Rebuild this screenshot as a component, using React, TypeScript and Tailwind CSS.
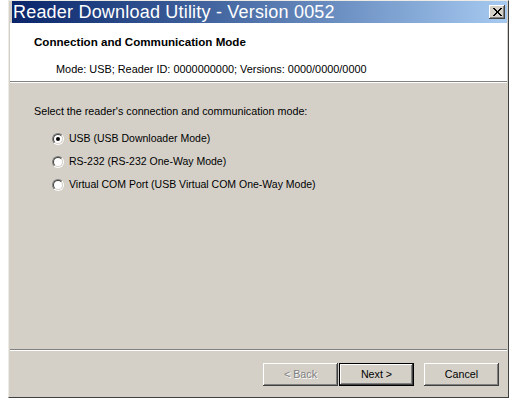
import React from "react";

const raised =
  "shadow-[inset_-1px_-1px_#404040,inset_1px_1px_#ffffff,inset_-2px_-2px_#808080,inset_2px_2px_#d4d0c8]";

function Radio({ label, checked }: { label: string; checked?: boolean }) {
  return (
    <div className="flex items-center h-[23px]">
      <div className="w-[12px] h-[12px] rounded-full border border-t-[#808080] border-l-[#808080] border-r-white border-b-white">
        <div className="w-full h-full rounded-full border border-t-[#404040] border-l-[#404040] border-r-[#d4d0c8] border-b-[#d4d0c8] bg-white flex items-center justify-center">
          {checked && <div className="w-[4px] h-[4px] rounded-full bg-black" />}
        </div>
      </div>
      <span className="ml-[5px] text-[10.5px]">{label}</span>
    </div>
  );
}

function Button({
  label,
  disabled,
  isDefault,
}: {
  label: string;
  disabled?: boolean;
  isDefault?: boolean;
}) {
  const inner = (
    <div
      className={`w-full h-full flex items-center justify-center bg-[#d4d0c8] ${raised} ${
        disabled ? "text-[#808080] [text-shadow:1px_1px_#ffffff]" : "text-black"
      }`}
    >
      {label}
    </div>
  );
  if (isDefault) {
    return <div className="w-[75px] h-[23px] border border-black">{inner}</div>;
  }
  return <div className="w-[75px] h-[23px]">{inner}</div>;
}

export default function App() {
  return (
    <div className="w-[515px] h-[403px] bg-white font-['Liberation_Sans',Arial,sans-serif] text-[10.7px] text-black">
      <div className="ml-[8px] w-[501px] h-[398px] flex flex-col bg-[#d4d0c8] border-l border-t border-l-[#ecebe6] border-t-[#ecebe6] border-r border-b border-r-[#404040] border-b-[#404040] px-[1px]">
        {/* caption bar */}
        <div className="ml-[2px] h-[22px] flex items-center bg-gradient-to-r from-[#0a246a] to-[#a6caf0]">
          <span className="ml-[1px] text-white text-[18px] leading-none tracking-[0.2px]">
            Reader Download Utility - Version 0052
          </span>
          <div className={`ml-auto mr-[2px] w-[16px] h-[14px] bg-[#d4d0c8] flex items-center justify-center ${raised}`}>
            <svg width="9" height="8" viewBox="0 0 9 8" shapeRendering="crispEdges">
              <path
                d="M0 0h2v1H0zM7 0h2v1H7zM1 1h2v1H1zM6 1h2v1H6zM2 2h2v1H2zM5 2h2v1H5zM3 3h3v1H3zM3 4h3v1H3zM2 5h2v1H2zM5 5h2v1H5zM1 6h2v1H1zM6 6h2v1H6zM0 7h2v1H0zM7 7h2v1H7z"
                fill="#000"
              />
            </svg>
          </div>
        </div>

        {/* header */}
        <div className="h-[59px] bg-white border-b border-b-[#808080] pl-[24px] pt-[12px]">
          <div className="font-bold text-[11.6px] leading-[13px]">Connection and Communication Mode</div>
          <div className="mt-[15px] pl-[22px] leading-[13px] text-[10.9px]">
            Mode: USB; Reader ID: 0000000000; Versions: 0000/0000/0000
          </div>
        </div>
        <div className="h-[1px] bg-white" />

        {/* body */}
        <div className="flex-1 pl-[24px] pt-[22px]">
          <div className="leading-[13px] text-[10.75px]">Select the reader's connection and communication mode:</div>
          <div className="mt-[9px] pl-[18px] flex flex-col">
            <Radio label="USB (USB Downloader Mode)" checked />
            <Radio label="RS-232 (RS-232 One-Way Mode)" />
            <Radio label="Virtual COM Port (USB Virtual COM One-Way Mode)" />
          </div>
        </div>

        {/* footer */}
        <div className="h-[1px] bg-[#808080]" />
        <div className="h-[1px] bg-white" />
        <div className="h-[46px] flex justify-end items-start pt-[12px] pr-[8px]">
          <Button label="< Back" disabled />
          <div className="ml-[1px]">
            <Button label="Next >" isDefault />
          </div>
          <div className="ml-[10px]">
            <Button label="Cancel" />
          </div>
        </div>
      </div>
    </div>
  );
}
